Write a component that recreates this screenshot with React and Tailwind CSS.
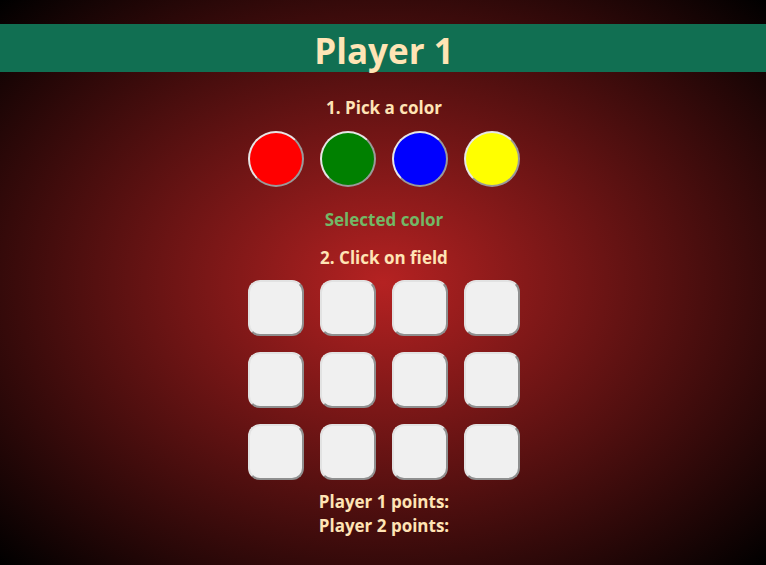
import React, { useState } from "react";

const colors = ["#ff0000", "#008000", "#0000ff", "#ffff00"];

const App = () => {
  const [selected, setSelected] = useState(null);

  return (
    <div
      className="min-h-screen h-[565px] overflow-hidden bg-[radial-gradient(#b52222,#000)] text-[#ffe4b5] font-bold"
      style={{ fontFamily: '"Open Sans", "Noto Sans", sans-serif' }}
    >
      {/* header */}
      <div className="mt-6 h-12 bg-[#116f52] flex items-center justify-center pt-1 pl-0.5">
        <h1 className="text-[35px] leading-none">Player 1</h1>
      </div>

      <div className="flex flex-col items-center pl-0.5">
        <p className="mt-6 text-[17px] leading-6">1. Pick a color</p>
        <div className="mt-[11px] flex gap-4">
          {colors.map((c) => (
            <button
              key={c}
              onClick={() => setSelected(c)}
              className="w-14 h-14 rounded-full border-2 border-t-[#e6e6e6] border-l-[#e6e6e6] border-b-[#9a9a9a] border-r-[#9a9a9a]"
              style={{ backgroundColor: c }}
            />
          ))}
        </div>

        <p className="mt-[21px] text-[17px] leading-6 text-[#72b866]">Selected color</p>
        <p className="mt-[14px] text-[17px] leading-6">2. Click on field</p>

        <div className="mt-[10px] grid grid-cols-4 gap-4">
          {Array.from({ length: 12 }).map((_, i) => (
            <button
              key={i}
              className="w-14 h-14 rounded-xl bg-[#f0f0f0] border-2 border-t-[#e2e2e2] border-l-[#e2e2e2] border-b-[#8f8f8f] border-r-[#8f8f8f]"
            />
          ))}
        </div>

        <p className="mt-[10px] text-[17px] leading-6">Player 1 points:</p>
        <p className="text-[17px] leading-6">Player 2 points:</p>
      </div>
    </div>
  );
};

export default App;
